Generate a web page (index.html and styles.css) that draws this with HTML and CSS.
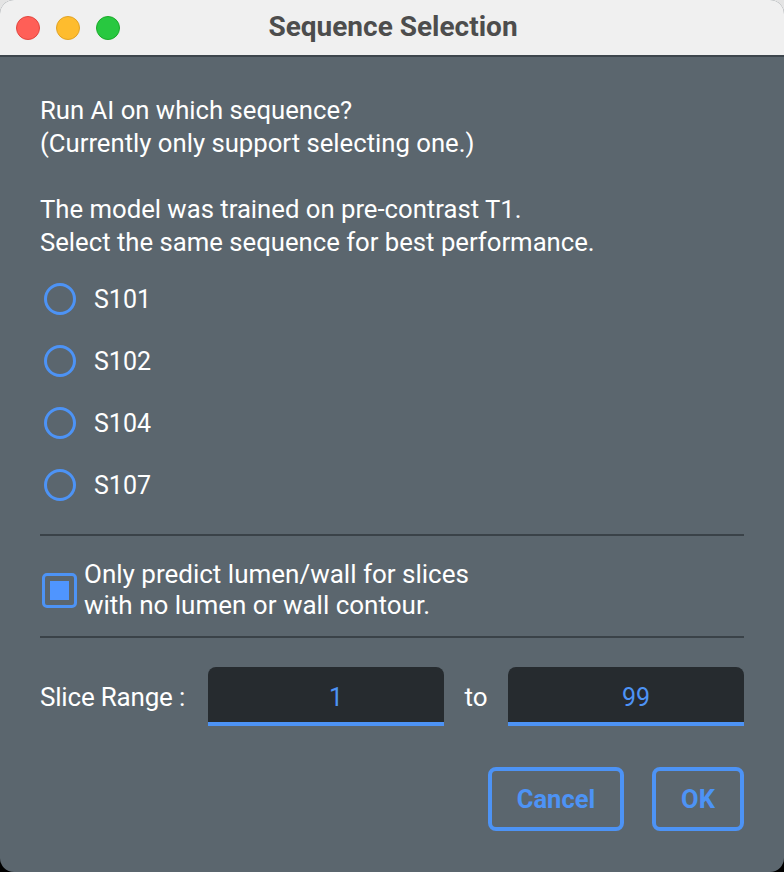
FILE: index.html
```html
<!DOCTYPE html>
<html>
<head>
<meta charset="utf-8">
<link rel="stylesheet" href="styles.css">
</head>
<body>
<div class="window">
  <div class="titlebar">
    <div class="lights">
      <span class="light red"></span>
      <span class="light yellow"></span>
      <span class="light green"></span>
    </div>
    <div class="title">Sequence Selection</div>
  </div>
  <div class="content">
    <div class="intro">
      <p>Run AI on which sequence?<br>(Currently only support selecting one.)</p>
      <p>The model was trained on pre-contrast T1.<br>Select the same sequence for best performance.</p>
    </div>
    <div class="radios">
      <label class="radio"><span class="circle"></span><span>S101</span></label>
      <label class="radio"><span class="circle"></span><span>S102</span></label>
      <label class="radio"><span class="circle"></span><span>S104</span></label>
      <label class="radio"><span class="circle"></span><span>S107</span></label>
    </div>
    <div class="sep"></div>
    <div class="check">
      <span class="box"><span class="fill"></span></span>
      <span class="check-label">Only predict lumen/wall for slices<br>with no lumen or wall contour.</span>
    </div>
    <div class="sep"></div>
    <div class="range">
      <span class="range-label">Slice Range :</span>
      <div class="field">1</div>
      <span class="to">to</span>
      <div class="field">99</div>
    </div>
    <div class="buttons">
      <button class="btn cancel">Cancel</button>
      <button class="btn ok">OK</button>
    </div>
  </div>
</div>
</body>
</html>
```
FILE: styles.css
```css
html, body {
  margin: 0;
  padding: 0;
  width: 784px;
  height: 872px;
  background: linear-gradient(#e4e4e4 0 50%, #000 50% 100%);
  overflow: hidden;
}
.window {
  width: 784px;
  height: 872px;
  border-radius: 14px;
  overflow: hidden;
  background: #5b666e;
  font-family: Roboto, "Noto Sans", sans-serif;
  color: #ffffff;
  display: flex;
  flex-direction: column;
}
.titlebar {
  height: 55px;
  background: #f0f0f0;
  border-bottom: 2px solid #3d464d;
  position: relative;
  display: flex;
  align-items: center;
  justify-content: center;
  flex-shrink: 0;
}
.lights {
  position: absolute;
  left: 16px;
  top: 16px;
  display: flex;
  gap: 16px;
}
.light {
  width: 24px;
  height: 24px;
  border-radius: 50%;
  box-sizing: border-box;
}
.red { background: #ff5f57; border: 1px solid #e2463f; }
.yellow { background: #febc2e; border: 1px solid #e1a325; }
.green { background: #28c840; border: 1px solid #1aab29; }
.title {
  font-family: Roboto, "Noto Sans", sans-serif;
  font-weight: 700;
  font-size: 28px;
  color: #4d4d4d;
  margin-top: -2px;
  margin-left: 2px;
}
.content {
  padding: 37px 40px 0 40px;
  display: flex;
  flex-direction: column;
}
.intro p {
  margin: 0 0 33px 0;
  font-size: 25.7px;
  line-height: 33px;
}
.intro p:last-child {
  margin-bottom: 0;
}
.radios {
  display: flex;
  flex-direction: column;
  gap: 30px;
  margin-top: 24px;
  margin-left: 4px;
}
.radio {
  display: flex;
  align-items: center;
  gap: 18px;
  height: 32px;
  font-size: 25px;
}
.circle {
  width: 32px;
  height: 32px;
  box-sizing: border-box;
  border: 3px solid #4d93f5;
  border-radius: 50%;
}
.sep {
  height: 2px;
  background: #3a4248;
  margin-top: 33px;
}
.check {
  display: flex;
  align-items: center;
  gap: 7px;
  margin-top: 23px;
  margin-left: 2px;
}
.box {
  width: 35px;
  height: 35px;
  box-sizing: border-box;
  border: 3px solid #4d93f5;
  border-radius: 5px;
  display: flex;
  align-items: center;
  justify-content: center;
}
.fill {
  width: 19px;
  height: 19px;
  background: #4f95ff;
}
.check-label {
  font-size: 26px;
  line-height: 31px;
}
.check + .sep {
  margin-top: 15px;
}
.range {
  display: flex;
  align-items: center;
  margin-top: 29px;
}
.range-label {
  font-size: 26px;
  width: 168px;
  letter-spacing: -0.2px;
}
.field {
  width: 216px;
  height: 49px;
  padding: 6px 0 0 20px;
  background: #262b2f;
  border-radius: 8px 8px 0 0;
  border-bottom: 4px solid #4d93f5;
  color: #4d93f5;
  font-size: 25px;
  display: flex;
  align-items: center;
  justify-content: center;
}
.to {
  font-size: 26px;
  width: 64px;
  text-align: center;
}
.buttons {
  display: flex;
  justify-content: flex-end;
  gap: 28px;
  margin-top: 41px;
}
.btn {
  height: 64px;
  background: transparent;
  border: 4px solid #4d93f5;
  border-radius: 8px;
  color: #4d93f5;
  font-family: Roboto, "Noto Sans", sans-serif;
  font-weight: 700;
  font-size: 25.5px;
  box-sizing: border-box;
  padding: 0;
}
.cancel { width: 136px; }
.ok { width: 92px; }
```
